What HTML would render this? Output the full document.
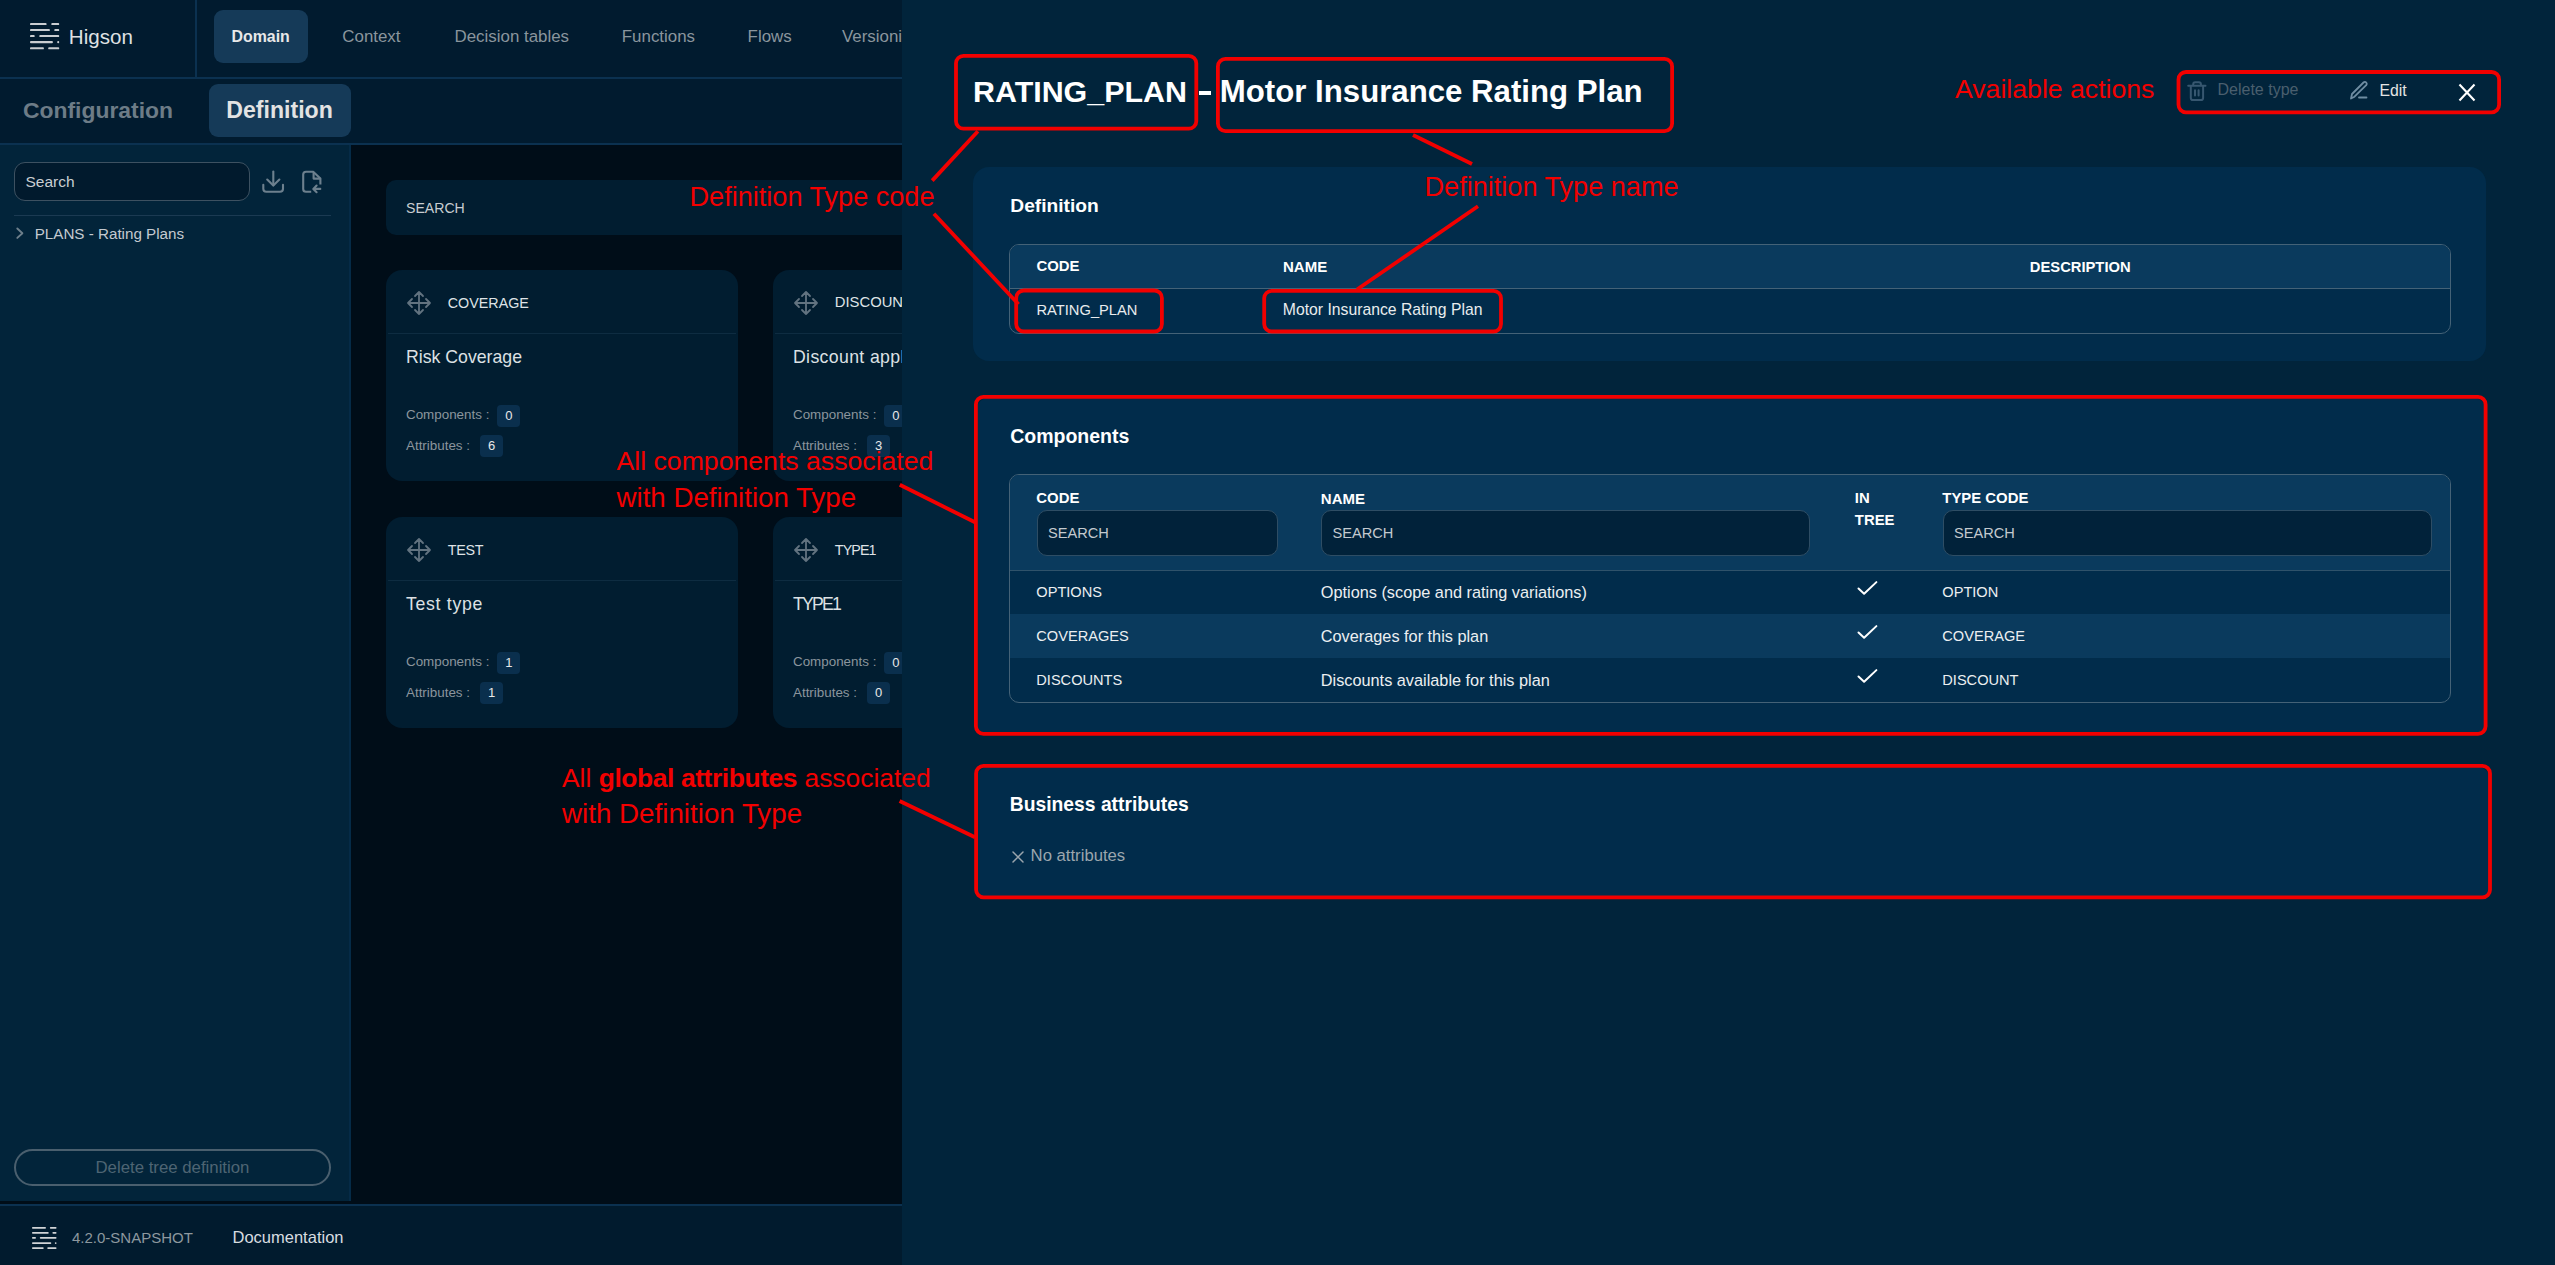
<!DOCTYPE html>
<html><head><meta charset="utf-8">
<style>
*{box-sizing:border-box}
html,body{margin:0;padding:0}
body{width:2555px;height:1265px;overflow:hidden;position:relative;background:#01243b;font-family:"Liberation Sans",sans-serif;}
.a{position:absolute}
.t{position:absolute;line-height:1;white-space:nowrap}
.badge{position:absolute;background:#0a2f4d;border-radius:4px;color:#e8e8e8;font-size:13px;text-align:center;line-height:22px;height:22px;width:23px}
</style></head>
<body>
<div class="a" style="left:0;top:0;width:902px;height:1265px;overflow:hidden;background:#000d18">
<div class="a" style="left:0;top:0;width:902px;height:77px;background:#011b2f"></div>
<div class="a" style="left:195px;top:0;width:1.6px;height:77px;background:#0b3150"></div>
<div class="a" style="left:0;top:77px;width:902px;height:2px;background:#0b3150"></div>
<div class="a" style="left:0;top:79px;width:902px;height:64px;background:#011b2f"></div>
<div class="a" style="left:0;top:143px;width:902px;height:2px;background:#0b3150"></div>
<div class="a" style="left:0;top:145px;width:349px;height:1056px;background:#02243a"></div>
<div class="a" style="left:349px;top:145px;width:2px;height:1056px;background:#052b47"></div>
<div class="a" style="left:351px;top:145px;width:551px;height:1059px;background:#000d18"></div>
<div class="a" style="left:0;top:1201px;width:902px;height:3px;background:#000d18"></div>
<div class="a" style="left:0;top:1204px;width:902px;height:2px;background:#0b3150"></div>
<div class="a" style="left:0;top:1206px;width:902px;height:59px;background:#011b2e"></div>
<svg class="a" style="left:29.7px;top:23.1px" width="32" height="29"><rect x="0.00" y="0.00" width="16.60" height="2.10" rx="0.90" fill="#c9cdd1"/><rect x="21.30" y="0.00" width="7.90" height="2.10" rx="0.90" fill="#c9cdd1"/><rect x="0.00" y="6.00" width="19.90" height="2.10" rx="0.90" fill="#c9cdd1"/><rect x="24.30" y="6.00" width="4.90" height="2.10" rx="0.90" fill="#c9cdd1"/><rect x="0.00" y="12.00" width="4.70" height="2.10" rx="0.90" fill="#c9cdd1"/><rect x="9.30" y="12.00" width="19.90" height="2.10" rx="0.90" fill="#c9cdd1"/><rect x="0.00" y="18.10" width="22.90" height="2.10" rx="0.90" fill="#c9cdd1"/><rect x="27.20" y="18.10" width="2.00" height="2.10" rx="0.90" fill="#c9cdd1"/><rect x="0.00" y="24.20" width="13.90" height="2.10" rx="0.90" fill="#c9cdd1"/><rect x="18.20" y="24.20" width="11.00" height="2.10" rx="0.90" fill="#c9cdd1"/></svg>
<div class="t" style="left:68.8px;top:27.36px;font-size:20.6px;font-weight:400;color:#dfe1e3;">Higson</div>
<div class="a" style="left:214px;top:10px;width:94px;height:53px;border-radius:9px;background:#153a58"></div>
<div class="t" style="left:231.5px;top:29.14px;font-size:15.9px;font-weight:700;color:#e8e8e8;">Domain</div>
<div class="t" style="left:342.3px;top:28.89px;font-size:16.9px;font-weight:400;color:#8a959d;">Context</div>
<div class="t" style="left:454.5px;top:28.89px;font-size:16.9px;font-weight:400;color:#8a959d;">Decision tables</div>
<div class="t" style="left:621.8px;top:28.89px;font-size:16.9px;font-weight:400;color:#8a959d;">Functions</div>
<div class="t" style="left:747.6px;top:28.89px;font-size:16.9px;font-weight:400;color:#8a959d;">Flows</div>
<div class="t" style="left:842.0px;top:28.89px;font-size:16.9px;font-weight:400;color:#8a959d;">Versioning</div>
<div class="t" style="left:23.0px;top:98.92px;font-size:22.9px;font-weight:700;color:#6d7c87;">Configuration</div>
<div class="a" style="left:209px;top:84px;width:142px;height:53px;border-radius:9px;background:#153a58"></div>
<div class="t" style="left:226.3px;top:98.75px;font-size:23.1px;font-weight:700;color:#e3e3e3;">Definition</div>
<div class="a" style="left:14px;top:162px;width:236px;height:39px;border-radius:11px;background:#011a2d;border:1.3px solid #3d5161"></div>
<div class="t" style="left:25.5px;top:174.08px;font-size:15.5px;font-weight:400;color:#c9ced2;">Search</div>
<svg class="a" style="left:255px;top:162px" width="70" height="40" viewBox="255 162 70 40" fill="none" stroke="#6d808e" stroke-width="2.1" stroke-linecap="round" stroke-linejoin="round"><path d="M273.3 171.5V185.3"/><path d="M267.2 179.5L273.3 185.6L279.4 179.5"/><path d="M263.3 184.8V188.8Q263.3 191.8 266.3 191.8H280Q283 191.8 283 188.8V184.8"/><path d="M311.2 191.8H306Q303.2 191.8 303.2 189V174.6Q303.2 171.8 306 171.8H313.2L320.4 178.4V184.6" stroke-linecap="butt"/><path d="M313.6 172V178.6H320.4" stroke-linecap="butt"/><path d="M320.3 188.9H313.5M316.6 185.6L313.3 188.9L316.6 192.2"/></svg>
<div class="a" style="left:14px;top:214.5px;width:317px;height:1.5px;background:#1b3a52"></div>
<svg class="a" style="left:14px;top:226px" width="12" height="15" fill="none" stroke="#6d7f8b" stroke-width="1.9" stroke-linecap="round" stroke-linejoin="round"><path d="M3.3 2.5L8.4 7.2L3.3 11.9"/></svg>
<div class="t" style="left:34.7px;top:226.13px;font-size:15.2px;font-weight:400;color:#c4cad0;">PLANS - Rating Plans</div>
<div class="a" style="left:14px;top:1149px;width:317px;height:37px;border-radius:19px;border:2px solid #4a5f6e"></div>
<div class="t" style="left:95.5px;top:1159.98px;font-size:16.8px;font-weight:400;color:#4e6473;">Delete tree definition</div>
<svg class="a" style="left:32px;top:1226.7px" width="27" height="25"><rect x="0.00" y="0.00" width="13.94" height="1.76" rx="0.76" fill="#d0d3d6"/><rect x="17.89" y="0.00" width="6.64" height="1.76" rx="0.76" fill="#d0d3d6"/><rect x="0.00" y="5.04" width="16.72" height="1.76" rx="0.76" fill="#d0d3d6"/><rect x="20.41" y="5.04" width="4.12" height="1.76" rx="0.76" fill="#d0d3d6"/><rect x="0.00" y="10.08" width="3.95" height="1.76" rx="0.76" fill="#d0d3d6"/><rect x="7.81" y="10.08" width="16.72" height="1.76" rx="0.76" fill="#d0d3d6"/><rect x="0.00" y="15.20" width="19.24" height="1.76" rx="0.76" fill="#d0d3d6"/><rect x="22.85" y="15.20" width="1.68" height="1.76" rx="0.76" fill="#d0d3d6"/><rect x="0.00" y="20.33" width="11.68" height="1.76" rx="0.76" fill="#d0d3d6"/><rect x="15.29" y="20.33" width="9.24" height="1.76" rx="0.76" fill="#d0d3d6"/></svg>
<div class="t" style="left:72.0px;top:1229.70px;font-size:15px;font-weight:400;color:#8d989f;">4.2.0-SNAPSHOT</div>
<div class="t" style="left:232.5px;top:1228.83px;font-size:16.5px;font-weight:400;color:#d8dde0;">Documentation</div>
<div class="a" style="left:386px;top:180px;width:600px;height:54.5px;border-radius:10px;background:#011d30"></div>
<div class="t" style="left:406.0px;top:201.06px;font-size:14.1px;font-weight:400;color:#c8cdd1;">SEARCH</div>
<div class="a" style="left:386px;top:270px;width:352px;height:211px;border-radius:16px;background:#011d30"></div>
<div class="a" style="left:388px;top:333px;width:348px;height:1.2px;background:#0e2c41"></div>
<svg class="a" style="left:405.5px;top:289.6px" width="26" height="26" viewBox="0 0 26 26" fill="none" stroke="#627380" stroke-width="1.8" stroke-linecap="round" stroke-linejoin="round"><path d="M13 2v22M2 13h22M9 6l4-4 4 4M9 20l4 4 4-4M6 9l-4 4 4 4M20 9l4 4-4 4"/></svg>
<div class="t" style="left:447.8px;top:295.90px;font-size:14.3px;font-weight:400;color:#dfe3e6;">COVERAGE</div>
<div class="t" style="left:406.0px;top:349.22px;font-size:17.7px;font-weight:400;color:#dde1e4;">Risk Coverage</div>
<div class="t" style="left:406.0px;top:408.46px;font-size:13.4px;font-weight:400;color:#8b959d;">Components :</div>
<div class="badge" style="left:497.4px;top:405px">0</div>
<div class="t" style="left:406.0px;top:438.66px;font-size:13.4px;font-weight:400;color:#8b959d;">Attributes :</div>
<div class="badge" style="left:480.2px;top:435.4px">6</div>
<div class="a" style="left:773px;top:270px;width:352px;height:211px;border-radius:16px;background:#011d30"></div>
<div class="a" style="left:775px;top:333px;width:348px;height:1.2px;background:#0e2c41"></div>
<svg class="a" style="left:792.5px;top:289.6px" width="26" height="26" viewBox="0 0 26 26" fill="none" stroke="#627380" stroke-width="1.8" stroke-linecap="round" stroke-linejoin="round"><path d="M13 2v22M2 13h22M9 6l4-4 4 4M9 20l4 4 4-4M6 9l-4 4 4 4M20 9l4 4-4 4"/></svg>
<div class="t" style="left:834.8px;top:295.47px;font-size:14.8px;font-weight:400;color:#dfe3e6;">DISCOUNT</div>
<div class="t" style="left:793.0px;top:349.22px;font-size:17.7px;font-weight:400;color:#dde1e4;letter-spacing:0.35px">Discount applied</div>
<div class="t" style="left:793.0px;top:408.46px;font-size:13.4px;font-weight:400;color:#8b959d;">Components :</div>
<div class="badge" style="left:884.4px;top:405px">0</div>
<div class="t" style="left:793.0px;top:438.66px;font-size:13.4px;font-weight:400;color:#8b959d;">Attributes :</div>
<div class="badge" style="left:867.2px;top:435.4px">3</div>
<div class="a" style="left:386px;top:517px;width:352px;height:211px;border-radius:16px;background:#011d30"></div>
<div class="a" style="left:388px;top:580px;width:348px;height:1.2px;background:#0e2c41"></div>
<svg class="a" style="left:405.5px;top:536.6px" width="26" height="26" viewBox="0 0 26 26" fill="none" stroke="#627380" stroke-width="1.8" stroke-linecap="round" stroke-linejoin="round"><path d="M13 2v22M2 13h22M9 6l4-4 4 4M9 20l4 4 4-4M6 9l-4 4 4 4M20 9l4 4-4 4"/></svg>
<div class="t" style="left:447.8px;top:542.90px;font-size:14.3px;font-weight:400;color:#dfe3e6;letter-spacing:-0.3px">TEST</div>
<div class="t" style="left:406.0px;top:596.22px;font-size:17.7px;font-weight:400;color:#dde1e4;letter-spacing:0.7px">Test type</div>
<div class="t" style="left:406.0px;top:655.46px;font-size:13.4px;font-weight:400;color:#8b959d;">Components :</div>
<div class="badge" style="left:497.4px;top:652px">1</div>
<div class="t" style="left:406.0px;top:685.66px;font-size:13.4px;font-weight:400;color:#8b959d;">Attributes :</div>
<div class="badge" style="left:480.2px;top:682.4px">1</div>
<div class="a" style="left:773px;top:517px;width:352px;height:211px;border-radius:16px;background:#011d30"></div>
<div class="a" style="left:775px;top:580px;width:348px;height:1.2px;background:#0e2c41"></div>
<svg class="a" style="left:792.5px;top:536.6px" width="26" height="26" viewBox="0 0 26 26" fill="none" stroke="#627380" stroke-width="1.8" stroke-linecap="round" stroke-linejoin="round"><path d="M13 2v22M2 13h22M9 6l4-4 4 4M9 20l4 4 4-4M6 9l-4 4 4 4M20 9l4 4-4 4"/></svg>
<div class="t" style="left:834.8px;top:542.90px;font-size:14.3px;font-weight:400;color:#dfe3e6;letter-spacing:-0.9px">TYPE1</div>
<div class="t" style="left:793.0px;top:596.22px;font-size:17.7px;font-weight:400;color:#dde1e4;letter-spacing:-1.8px">TYPE1</div>
<div class="t" style="left:793.0px;top:655.46px;font-size:13.4px;font-weight:400;color:#8b959d;">Components :</div>
<div class="badge" style="left:884.4px;top:652px">0</div>
<div class="t" style="left:793.0px;top:685.66px;font-size:13.4px;font-weight:400;color:#8b959d;">Attributes :</div>
<div class="badge" style="left:867.2px;top:682.4px">0</div>
</div>
<div class="a" style="left:902px;top:0;width:1653px;height:1265px;background:#01243b"></div>
<div class="t" style="left:973.0px;top:75.77px;font-size:30.4px;font-weight:700;color:#ffffff;">RATING_PLAN</div>
<div class="a" style="left:1198.6px;top:91.4px;width:12.2px;height:3.2px;background:#ffffff"></div>
<div class="t" style="left:1219.8px;top:75.99px;font-size:31.2px;font-weight:700;color:#ffffff;">Motor Insurance Rating Plan</div>
<svg class="a" style="left:2180px;top:76px" width="35" height="30" viewBox="0 0 35 30" fill="none" stroke="#375770" stroke-width="2" stroke-linecap="round" stroke-linejoin="round"><path d="M8.2 9.7H25.5"/><path d="M13.2 9.2V8.2Q13.2 6.2 15.2 6.2H18.9Q20.9 6.2 20.9 8.2V9.2"/><path d="M10.8 10V22Q10.8 24.1 12.9 24.1H21Q23.1 24.1 23.1 22V10"/><path d="M15 14.2V19.6M18.6 14.2V19.6"/></svg>
<div class="t" style="left:2217.5px;top:82.46px;font-size:16px;font-weight:400;color:#4a5f6e;">Delete type</div>
<svg class="a" style="left:2348px;top:79.4px" width="22" height="22" viewBox="0 0 22 22" fill="none" stroke="#6f8da2" stroke-width="1.8" stroke-linecap="round" stroke-linejoin="round"><path d="M3 19.5l1-4.5L15.5 3.5c.8-.8 2-.8 2.7 0s.8 2 0 2.7L6.5 17.7 3 19.5z"/><path d="M11 18.5h7.5"/></svg>
<div class="t" style="left:2379.5px;top:82.63px;font-size:15.8px;font-weight:400;color:#e4e4e4;">Edit</div>
<svg class="a" style="left:2458px;top:82.5px" width="18" height="19" viewBox="0 0 18 19" fill="none" stroke="#ffffff" stroke-width="2.1" stroke-linecap="square"><path d="M2.2 2.2l13.6 14.6M15.8 2.2L2.2 16.8"/></svg>
<div class="a" style="left:973px;top:167px;width:1513px;height:193.5px;border-radius:16px;background:#012c4b"></div>
<div class="t" style="left:1010.3px;top:196.05px;font-size:19.2px;font-weight:700;color:#ffffff;">Definition</div>
<div class="a" style="left:1009px;top:244px;width:1442px;height:90px;border-radius:10px;border:1.2px solid #446277;overflow:hidden"><div class="a" style="left:0;top:0;width:100%;height:43.5px;background:#0a3a5d;border-bottom:1.2px solid #446277"></div></div>
<div class="t" style="left:1036.5px;top:259.09px;font-size:14.9px;font-weight:700;color:#ffffff;">CODE</div>
<div class="t" style="left:1283.0px;top:258.80px;font-size:15px;font-weight:700;color:#ffffff;">NAME</div>
<div class="t" style="left:2029.8px;top:259.51px;font-size:14.75px;font-weight:700;color:#ffffff;">DESCRIPTION</div>
<div class="t" style="left:1036.5px;top:303.26px;font-size:14.7px;font-weight:400;color:#e9ecee;">RATING_PLAN</div>
<div class="t" style="left:1282.8px;top:302.27px;font-size:15.75px;font-weight:400;color:#e9ecee;">Motor Insurance Rating Plan</div>
<div class="a" style="left:975px;top:397px;width:1512px;height:338px;border-radius:16px;background:#012c4b"></div>
<div class="t" style="left:1010.2px;top:426.99px;font-size:19.5px;font-weight:700;color:#ffffff;">Components</div>
<div class="a" style="left:1009px;top:473.5px;width:1442px;height:229px;border-radius:10px;border:1.2px solid #446277;overflow:hidden"><div class="a" style="left:0;top:0;width:100%;height:96px;background:#0a3a5d;border-bottom:1.2px solid #2f526a"></div><div class="a" style="left:0;top:139.5px;width:100%;height:44px;background:#0a3a5d"></div></div>
<div class="t" style="left:1036.3px;top:491.39px;font-size:14.9px;font-weight:700;color:#ffffff;">CODE</div>
<div class="t" style="left:1320.8px;top:491.30px;font-size:15px;font-weight:700;color:#ffffff;">NAME</div>
<div class="t" style="left:1854.8px;top:491.19px;font-size:14.9px;font-weight:700;color:#ffffff;">IN</div>
<div class="t" style="left:1854.8px;top:512.79px;font-size:14.9px;font-weight:700;color:#ffffff;">TREE</div>
<div class="t" style="left:1942.3px;top:491.39px;font-size:14.9px;font-weight:700;color:#ffffff;">TYPE CODE</div>
<div class="a" style="left:1036.5px;top:509.5px;width:241.3px;height:46.2px;border-radius:10px;background:#01223a;border:1.2px solid #2e4d64"></div>
<div class="t" style="left:1048.1px;top:525.64px;font-size:14.6px;font-weight:400;color:#c4cacf;">SEARCH</div>
<div class="a" style="left:1321px;top:509.5px;width:489.0px;height:46.2px;border-radius:10px;background:#01223a;border:1.2px solid #2e4d64"></div>
<div class="t" style="left:1332.6px;top:525.64px;font-size:14.6px;font-weight:400;color:#c4cacf;">SEARCH</div>
<div class="a" style="left:1942.5px;top:509.5px;width:489.0px;height:46.2px;border-radius:10px;background:#01223a;border:1.2px solid #2e4d64"></div>
<div class="t" style="left:1954.1px;top:525.64px;font-size:14.6px;font-weight:400;color:#c4cacf;">SEARCH</div>
<div class="t" style="left:1036.3px;top:585.04px;font-size:14.6px;font-weight:400;color:#eceff1;">OPTIONS</div>
<div class="t" style="left:1320.8px;top:583.60px;font-size:16.3px;font-weight:400;color:#eceff1;">Options (scope and rating variations)</div>
<svg class="a" style="left:1855px;top:579px" width="24" height="19" viewBox="0 0 24 19" fill="none" stroke="#ffffff" stroke-width="2" stroke-linecap="round" stroke-linejoin="round"><path d="M3.5 9.5L9.1 14.8L21.4 3.1"/></svg>
<div class="t" style="left:1942.3px;top:585.04px;font-size:14.6px;font-weight:400;color:#eceff1;">OPTION</div>
<div class="t" style="left:1036.3px;top:629.04px;font-size:14.6px;font-weight:400;color:#eceff1;">COVERAGES</div>
<div class="t" style="left:1320.8px;top:627.60px;font-size:16.3px;font-weight:400;color:#eceff1;">Coverages for this plan</div>
<svg class="a" style="left:1855px;top:623px" width="24" height="19" viewBox="0 0 24 19" fill="none" stroke="#ffffff" stroke-width="2" stroke-linecap="round" stroke-linejoin="round"><path d="M3.5 9.5L9.1 14.8L21.4 3.1"/></svg>
<div class="t" style="left:1942.3px;top:629.04px;font-size:14.6px;font-weight:400;color:#eceff1;">COVERAGE</div>
<div class="t" style="left:1036.3px;top:673.04px;font-size:14.6px;font-weight:400;color:#eceff1;">DISCOUNTS</div>
<div class="t" style="left:1320.8px;top:671.60px;font-size:16.3px;font-weight:400;color:#eceff1;">Discounts available for this plan</div>
<svg class="a" style="left:1855px;top:667px" width="24" height="19" viewBox="0 0 24 19" fill="none" stroke="#ffffff" stroke-width="2" stroke-linecap="round" stroke-linejoin="round"><path d="M3.5 9.5L9.1 14.8L21.4 3.1"/></svg>
<div class="t" style="left:1942.3px;top:673.04px;font-size:14.6px;font-weight:400;color:#eceff1;">DISCOUNT</div>
<div class="a" style="left:975px;top:766px;width:1516px;height:133px;border-radius:16px;background:#012c4b"></div>
<div class="t" style="left:1009.8px;top:794.66px;font-size:19.3px;font-weight:700;color:#ffffff;">Business attributes</div>
<svg class="a" style="left:1011px;top:849.5px" width="14" height="14" viewBox="0 0 14 14" fill="none" stroke="#9aa5ad" stroke-width="1.5" stroke-linecap="round"><path d="M2 2l10 10M12 2L2 12"/></svg>
<div class="t" style="left:1030.6px;top:847.66px;font-size:16.7px;font-weight:400;color:#9ba6ae;">No attributes</div>
<svg class="a" style="left:0;top:0" width="2555" height="1265" fill="none" stroke="#f20000" stroke-width="3.8" stroke-linecap="butt"><rect x="956.0" y="55.8" width="240.3" height="72.9" rx="7.5" ry="7.5"/><rect x="1217.9" y="58.9" width="454.2" height="72.2" rx="7.5" ry="7.5"/><rect x="2178.5" y="72.0" width="320.6" height="40.3" rx="7.5" ry="7.5"/><rect x="1016.2" y="290.5" width="145.7" height="41.0" rx="7.5" ry="7.5"/><rect x="1264.2" y="290.8" width="236.8" height="40.7" rx="7.5" ry="7.5"/><rect x="975.9" y="396.9" width="1509.7" height="336.9" rx="7.5" ry="7.5"/><rect x="976.1" y="765.9" width="1513.9" height="131.4" rx="7.5" ry="7.5"/><path d="M932.2 180.6L977.9 131.3"/><path d="M933.9 213.8L1018.5 304.2"/><path d="M1413 135L1472 164"/><path d="M1478 206.3L1357 289.5"/><path d="M899.8 484.8L975 522.3"/><path d="M899.6 801L975 837.2"/></svg>
<div class="t" style="left:689.5px;top:183.36px;font-size:27.1px;font-weight:400;color:#f20000;">Definition Type code</div>
<div class="t" style="left:1424.5px;top:172.66px;font-size:27.1px;font-weight:400;color:#f20000;">Definition Type name</div>
<div class="t" style="left:1955.0px;top:76.44px;font-size:26.65px;font-weight:400;color:#f20000;">Available actions</div>
<div class="t" style="left:616.5px;top:448.44px;font-size:26.65px;font-weight:400;color:#f20000;">All components associated</div>
<div class="t" style="left:616.5px;top:483.55px;font-size:27.7px;font-weight:400;color:#f20000;">with Definition Type</div>
<div class="t" style="left:562.0px;top:764.95px;font-size:26.4px;font-weight:400;color:#f20000;">All <b style="letter-spacing:-0.4px">global attributes</b> associated</div>
<div class="t" style="left:562.0px;top:800.11px;font-size:27.75px;font-weight:400;color:#f20000;">with Definition Type</div>
</body></html>
